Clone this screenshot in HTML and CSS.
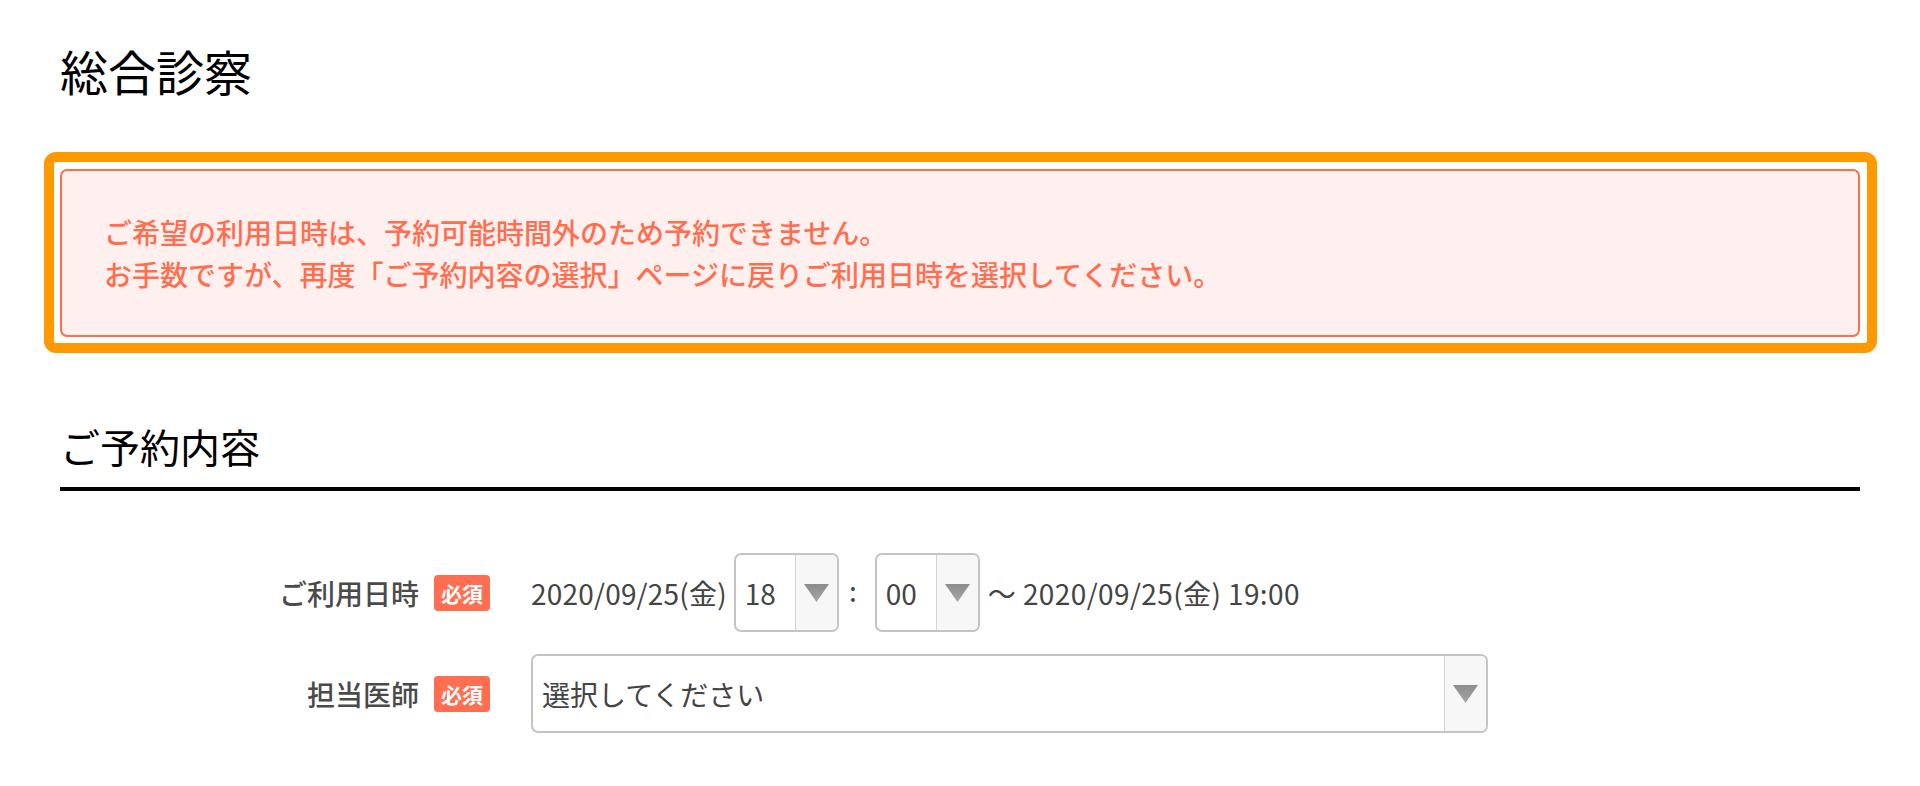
FILE: index.html
```html
<!DOCTYPE html>
<html lang="ja">
<head>
<meta charset="utf-8">
<title>総合診察</title>
<link rel="stylesheet" href="styles.css">
</head>
<body>
<div class="page">
  <h1 class="title">総合診察</h1>

  <div class="alert-frame">
    <div class="alert">
      <p>ご希望の利用日時は、予約可能時間外のため予約できません。</p>
      <p>お手数ですが、再度「ご予約内容の選択」ページに戻りご利用日時を選択してください。</p>
    </div>
  </div>

  <h2 class="section-title">ご予約内容</h2>

  <div class="form">
    <div class="form-row">
      <div class="form-label">
        <span class="label-text">ご利用日時</span>
        <span class="badge">必須</span>
      </div>
      <div class="form-value">
        <span class="date">2020/09/25(金)</span>
        <div class="select select-time">
          <span class="select-text">18</span>
          <span class="select-arrow"><svg width="25" height="18" viewBox="0 0 25 18"><defs><linearGradient id="g1" x1="0" y1="0" x2="0" y2="1"><stop offset="0" stop-color="#8c8c8c"/><stop offset="1" stop-color="#a6a6a6"/></linearGradient></defs><path d="M0 0H25L12.5 18Z" fill="url(#g1)"/></svg></span>
        </div>
        <span class="colon">:</span>
        <div class="select select-time">
          <span class="select-text">00</span>
          <span class="select-arrow"><svg width="25" height="18" viewBox="0 0 25 18"><defs><linearGradient id="g2" x1="0" y1="0" x2="0" y2="1"><stop offset="0" stop-color="#8c8c8c"/><stop offset="1" stop-color="#a6a6a6"/></linearGradient></defs><path d="M0 0H25L12.5 18Z" fill="url(#g2)"/></svg></span>
        </div>
        <span class="date-end">〜 2020/09/25(金) 19:00</span>
      </div>
    </div>

    <div class="form-row">
      <div class="form-label">
        <span class="label-text">担当医師</span>
        <span class="badge">必須</span>
      </div>
      <div class="form-value">
        <div class="select select-wide">
          <span class="select-text">選択してください</span>
          <span class="select-arrow"><svg width="25" height="18" viewBox="0 0 25 18"><defs><linearGradient id="g3" x1="0" y1="0" x2="0" y2="1"><stop offset="0" stop-color="#8c8c8c"/><stop offset="1" stop-color="#a6a6a6"/></linearGradient></defs><path d="M0 0H25L12.5 18Z" fill="url(#g3)"/></svg></span>
        </div>
      </div>
    </div>
  </div>
</div>
</body>
</html>
```

FILE: styles.css
```css
* {
  box-sizing: border-box;
}

html, body {
  margin: 0;
  padding: 0;
  background: #ffffff;
}

body {
  font-family: "Noto Sans CJK JP", "Noto Sans", sans-serif;
  color: #000;
}

.page {
  padding: 0 60px;
}

.title {
  margin: 41px 0 0;
  font-size: 48px;
  line-height: 58px;
  font-weight: 400;
  color: #000;
}

.alert-frame {
  margin: 53px -17px 0 -16px;
  border: 10px solid #ff9900;
  border-radius: 12px;
  padding: 7px 7px 6px 6px;
  background: #fff;
}

.alert {
  border: 2px solid #ff6e50;
  border-radius: 7px;
  background: #fff0f0;
  padding: 40px 42px;
  color: #ff6e4f;
  font-size: 28px;
  line-height: 42px;
  font-weight: 500;
}

.alert p {
  margin: 0;
}

.section-title {
  margin: 66px 0 0;
  font-size: 40px;
  line-height: 54px;
  font-weight: 400;
  color: #000;
  padding-bottom: 14px;
  border-bottom: 4px solid #000;
}

.form {
  margin-top: 62px;
  display: flex;
  flex-direction: column;
  gap: 22px;
}

.form-row {
  display: grid;
  grid-template-columns: 430px auto;
  column-gap: 41px;
  align-items: center;
  height: 79px;
}

.form-label {
  display: flex;
  justify-content: flex-end;
  align-items: center;
  gap: 15px;
}

.label-text {
  font-size: 28px;
  line-height: 40px;
  color: #4a4a4a;
  font-weight: 500;
}

.badge {
  width: 56px;
  height: 36px;
  border-radius: 4px;
  background: #ff6e50;
  color: #fff;
  font-size: 21px;
  font-weight: 700;
  display: flex;
  align-items: center;
  justify-content: center;
}

.form-value {
  display: flex;
  align-items: center;
  font-size: 28px;
  color: #444;
  white-space: nowrap;
}

.date {
  margin-right: 7px;
  letter-spacing: 0.2px;
}

.select {
  height: 79px;
  border: 2px solid #c4c4c4;
  border-radius: 7px;
  display: flex;
  align-items: stretch;
  background: #fff;
  overflow: hidden;
}

.select-time {
  width: 105px;
}

.select-wide {
  width: 957px;
}

.select-text {
  flex: 1;
  display: flex;
  align-items: center;
  padding-left: 9px;
  font-size: 28px;
  color: #444;
}

.select-arrow {
  width: 42px;
  border-left: 1px solid #d4d4d4;
  background: #f7f7f7;
  display: flex;
  align-items: center;
  justify-content: center;
}

.colon {
  width: 20px;
  text-align: center;
  margin: 0 12px 0 4px;
  color: #444;
  padding-bottom: 6px;
}

.date-end {
  margin-left: 8px;
  letter-spacing: 0.4px;
}
```
